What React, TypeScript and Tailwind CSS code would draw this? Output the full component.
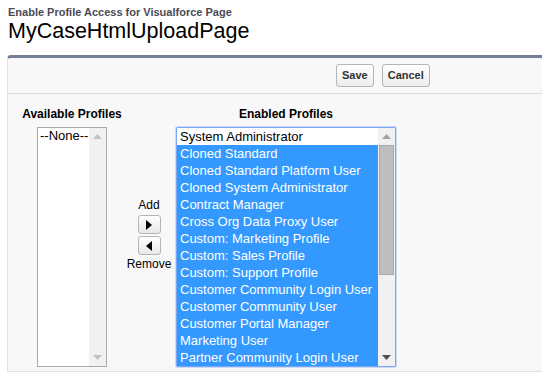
const enabled = [
  'System Administrator',
  'Cloned Standard',
  'Cloned Standard Platform User',
  'Cloned System Administrator',
  'Contract Manager',
  'Cross Org Data Proxy User',
  'Custom: Marketing Profile',
  'Custom: Sales Profile',
  'Custom: Support Profile',
  'Customer Community Login User',
  'Customer Community User',
  'Customer Portal Manager',
  'Marketing User',
  'Partner Community Login User',
]

function ScrollTrack({ thumb, upColor, downColor }: { thumb: boolean; upColor: string; downColor: string }) {
  return (
    <div className="flex w-[17px] shrink-0 flex-col items-center bg-[#f1f1f1]">
      <div className="flex h-[17px] items-center justify-center">
        <svg width="9" height="5" viewBox="0 0 9 5"><path d="M0 5 L4.5 0 L9 5 Z" fill={upColor} /></svg>
      </div>
      <div className="flex w-full flex-1 flex-col px-[1px]">
        {thumb && <div className="h-[130px] w-full border border-[#a8a8a8] bg-[#bebebe]" />}
      </div>
      <div className="flex h-[17px] items-center justify-center">
        <svg width="9" height="5" viewBox="0 0 9 5"><path d="M0 0 L9 0 L4.5 5 Z" fill={downColor} /></svg>
      </div>
    </div>
  )
}

function MoveButton({ dir }: { dir: 'right' | 'left' }) {
  return (
    <div className="flex h-[19px] w-[23px] items-center justify-center rounded-[3px] border border-[#b5b5b5] bg-gradient-to-b from-white to-[#e8e8e8]">
      <svg width="6" height="10" viewBox="0 0 6 10">
        {dir === 'right' ? <path d="M0 0 L6 5 L0 10 Z" fill="#000" /> : <path d="M6 0 L0 5 L6 10 Z" fill="#000" />}
      </svg>
    </div>
  )
}

function PanelButton({ label }: { label: string }) {
  return (
    <div className="flex h-[23px] items-center rounded-[3px] border border-[#b5b5b5] bg-gradient-to-b from-white to-[#ececec] px-[5px] text-[11px] font-bold text-[#333]">
      {label}
    </div>
  )
}

export default function App() {
  return (
    <div className="h-[380px] w-[542px] overflow-hidden bg-white font-['Liberation_Sans',Arial,sans-serif]">
      <div className="pl-[8px] pt-[6px]">
        <div className="text-[11px] font-bold leading-[13px] text-[#4a4a56]">Enable Profile Access for Visualforce Page</div>
        <div className="text-[21.5px] leading-[24px] text-black">MyCaseHtmlUploadPage</div>
      </div>
      <div className="ml-[7px] mt-[12px] h-[317px] rounded-tl-[4px] border-l border-b border-t-[3px] border-l-[#e0e0e0] border-b-[#e0e0e0] border-t-[#747e96] bg-[#f8f8f8]">
        <div className="flex h-[36px] items-center gap-[8px] border-b border-[#dbdbdb] pl-[328px]">
          <PanelButton label="Save" />
          <PanelButton label="Cancel" />
        </div>
        <div className="flex pl-[14px] pt-[13px]">
          <div className="flex w-[100px] flex-col items-center">
            <div className="h-[20px] text-[12px] font-bold leading-[14px] text-black">Available Profiles</div>
            <div className="flex h-[240px] w-[70px] border border-[#a9a9a9] bg-white">
              <div className="flex-1 pl-[2px] text-[13px] leading-[16px] text-black">--None--</div>
              <ScrollTrack thumb={false} upColor="#c2c2c2" downColor="#c2c2c2" />
            </div>
          </div>
          <div className="flex w-[54px] flex-col items-center pt-[90px]">
            <div className="text-[12px] leading-[16px] text-black">Add</div>
            <div className="mt-[2px]"><MoveButton dir="right" /></div>
            <div className="mt-[2px]"><MoveButton dir="left" /></div>
            <div className="mt-[1px] text-[12px] leading-[16px] text-black">Remove</div>
          </div>
          <div className="flex w-[220px] flex-col items-center">
            <div className="h-[20px] text-[12px] font-bold leading-[14px] text-black">Enabled Profiles</div>
            <div className="flex h-[240px] w-[220px] rounded-[1px] border border-[#7aa7f0] bg-white outline outline-1 outline-[#c9dbf8]">
              <div className="flex-1 overflow-hidden">
                {enabled.map((name, i) => (
                  <div
                    key={name}
                    className={
                      i === 0
                        ? 'h-[17px] whitespace-nowrap pl-[3px] text-[13px] leading-[17px] text-black'
                        : 'h-[17px] whitespace-nowrap bg-[#3399ff] pl-[3px] text-[13px] leading-[17px] text-white'
                    }
                  >
                    {name}
                  </div>
                ))}
              </div>
              <ScrollTrack thumb={true} upColor="#a3a3a3" downColor="#505050" />
            </div>
          </div>
        </div>
      </div>
    </div>
  )
}
